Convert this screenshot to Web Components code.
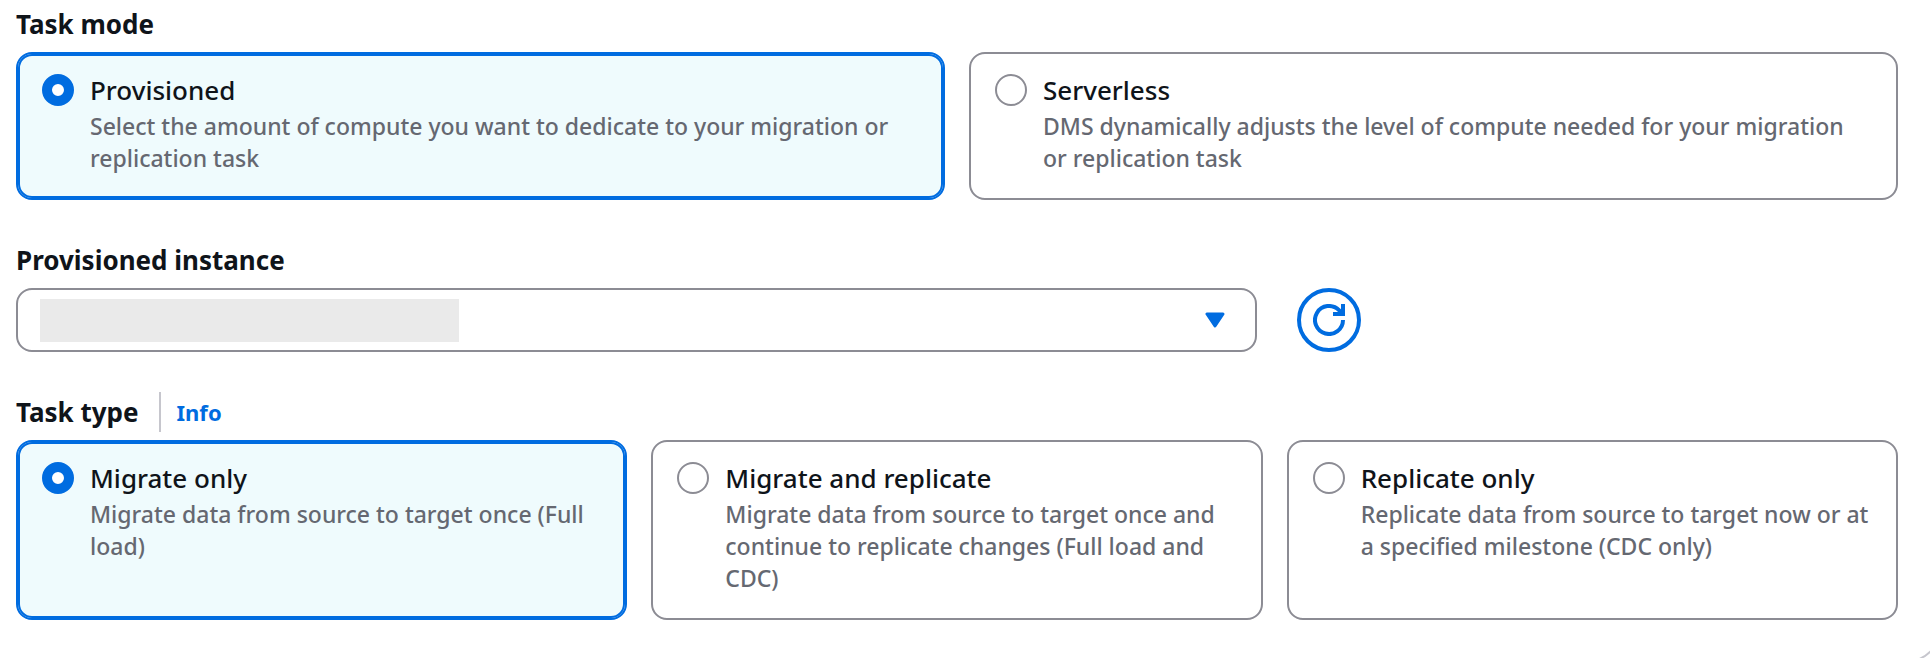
<!DOCTYPE html>
<html lang="en">
<head>
<meta charset="utf-8">
<meta name="viewport" content="width=device-width, initial-scale=1">
<title>Create data migration task</title>
<style>
  body {
    margin: 0;
    background: #fff;
    color: #0f141a;
    font-family: "Noto Sans", "Open Sans", sans-serif;
    overflow: hidden;
    --blue: #006ce0;
    --grey: #8c8c94;
    --grey-text: #656871;
    --selected: #effbfd;
  }
</style>
</head>
<body>
  <task-panel>
    <form-field label="Task mode">
      <tile-group label="Task mode">
        <tile-option name="mode" value="provisioned" checked>
          Provisioned
          <span slot="description">Select the amount of compute you want to dedicate to your migration or replication task</span>
        </tile-option>
        <tile-option name="mode" value="serverless">
          Serverless
          <span slot="description">DMS dynamically adjusts the level of compute needed for your migration or replication task</span>
        </tile-option>
      </tile-group>
    </form-field>

    <instance-select label="Provisioned instance"></instance-select>

    <form-field label="Task type">
      <info-link slot="info">Info</info-link>
      <tile-group label="Task type">
        <tile-option name="type" value="full-load" checked>
          Migrate only
          <span slot="description">Migrate data from source to target once (Full load)</span>
        </tile-option>
        <tile-option name="type" value="full-load-and-cdc">
          Migrate and replicate
          <span slot="description">Migrate data from source to target once and continue to replicate changes (Full load and CDC)</span>
        </tile-option>
        <tile-option name="type" value="cdc">
          Replicate only
          <span slot="description">Replicate data from source to target now or at a specified milestone (CDC only)</span>
        </tile-option>
      </tile-group>
    </form-field>
  </task-panel>

<script>
class TaskPanel extends HTMLElement {
  constructor() {
    super();
    this.attachShadow({ mode: "open" });
  }

  connectedCallback() {
    // the panel's frame runs past the window, only its lower corner shows
    this.shadowRoot.innerHTML = `
      <style>
        :host {
          display: flex;
          flex-direction: column;
          gap: 40px;
          margin: -38px -10px 0 -26px;
          padding: 40px;
          border: 2px solid #c6c6cd;
          border-radius: 32px;
        }
      </style>
      <slot></slot>
    `;
  }
}

class FormField extends HTMLElement {
  constructor() {
    super();
    this.attachShadow({ mode: "open" });
  }

  connectedCallback() {
    this.shadowRoot.innerHTML = `
      <style>
        :host {
          display: flex;
          flex-direction: column;
          gap: 8px;
        }
        header {
          display: flex;
          align-items: center;
          gap: 20px;
        }
        h2 {
          margin: 0;
          font-size: 26px;
          font-weight: 700;
          line-height: 40px;
        }
      </style>
      <header>
        <h2>${this.getAttribute("label")}</h2>
        <slot name="info"></slot>
      </header>
      <slot></slot>
    `;
  }
}

class InfoLink extends HTMLElement {
  constructor() {
    super();
    this.attachShadow({ mode: "open" });
  }

  connectedCallback() {
    this.shadowRoot.innerHTML = `
      <style>
        :host {
          display: block;
          border-left: 2px solid #c6c6cd;
          padding-left: 16px;
        }
        a {
          color: var(--blue);
          font-size: 22px;
          font-weight: 700;
          line-height: 40px;
          display: block;
          text-decoration: none;
        }
        a:hover {
          text-decoration: underline;
        }
      </style>
      <a href="#info"><slot></slot></a>
    `;
  }
}

class TileGroup extends HTMLElement {
  constructor() {
    super();
    this.attachShadow({ mode: "open" });
  }

  connectedCallback() {
    this.setAttribute("role", "radiogroup");
    this.setAttribute("aria-label", this.getAttribute("label"));
    this.shadowRoot.innerHTML = `
      <style>
        :host {
          display: grid;
          grid-auto-flow: column;
          grid-auto-columns: minmax(0, 1fr);
          gap: 24px;
        }
      </style>
      <slot></slot>
    `;

    // each radio sits in its own shadow root, so the group unchecks the others
    this.addEventListener("tileSelect", (event) => {
      this.querySelectorAll("tile-option").forEach((tile) => {
        tile.checked = tile === event.target;
      });
    });
  }
}

class TileOption extends HTMLElement {
  constructor() {
    super();
    this.attachShadow({ mode: "open" });
  }

  connectedCallback() {
    this.render();
    this.addEventListeners();
  }

  set checked(value) {
    this.toggleAttribute("checked", value);
    this.shadowRoot.querySelector("input").checked = value;
  }

  render() {
    this.shadowRoot.innerHTML = `
      <style>
        :host {
          display: flex;
          border: 2px solid var(--grey);
          border-radius: 16px;
        }
        :host([checked]) {
          border-color: var(--blue);
          background: var(--selected);
          box-shadow: inset 0 0 0 2px var(--blue);
        }
        label {
          flex: 1;
          display: flex;
          align-items: flex-start;
          gap: 16px;
          padding: 20px 24px 24px;
          cursor: pointer;
        }
        input {
          appearance: none;
          flex: none;
          box-sizing: border-box;
          width: 32px;
          height: 32px;
          margin: 0;
          border: 2px solid var(--grey);
          border-radius: 50%;
          background: #fff;
          cursor: pointer;
        }
        input:checked {
          border: 10px solid var(--blue);
        }
        .text {
          display: flex;
          flex-direction: column;
          gap: 4px;
        }
        .title {
          font-size: 26px;
          font-weight: 500;
          line-height: 32px;
        }
        .description {
          color: var(--grey-text);
          font-size: 23px;
          font-weight: 500;
          line-height: 32px;
        }
      </style>
      <label for="radio">
        <input type="radio" id="radio">
        <span class="text">
          <span class="title"><slot></slot></span>
          <span class="description"><slot name="description"></slot></span>
        </span>
      </label>
    `;
    const radio = this.shadowRoot.querySelector("input");
    radio.name = this.getAttribute("name");
    radio.value = this.getAttribute("value");
    radio.checked = this.hasAttribute("checked");
  }

  addEventListeners() {
    this.shadowRoot.querySelector("input").addEventListener("change", () => {
      this.dispatchEvent(new CustomEvent("tileSelect", { bubbles: true }));
    });
  }
}

class InstanceSelect extends HTMLElement {
  constructor() {
    super();
    this.attachShadow({ mode: "open" });
  }

  connectedCallback() {
    this.shadowRoot.innerHTML = `
      <style>
        :host {
          display: flex;
          flex-direction: column;
          gap: 8px;
        }
        label {
          font-size: 26px;
          font-weight: 700;
          line-height: 40px;
        }
        .row {
          display: grid;
          grid-template-columns: repeat(12, minmax(0, 1fr));
          gap: 40px;
        }
        .select {
          grid-column: span 8;
          display: grid;
          align-items: center;
        }
        .select > * {
          grid-area: 1 / 1;
        }
        select {
          appearance: none;
          width: 100%;
          height: 64px;
          padding: 0 64px 0 24px;
          border: 2px solid var(--grey);
          border-radius: 16px;
          background: #fff;
          color: inherit;
          font: 500 26px/32px "Noto Sans", sans-serif;
        }
        /* instance name is masked */
        .mask {
          width: 419px;
          height: 43px;
          margin-left: 24px;
          background: #eaeaea;
          pointer-events: none;
        }
        .caret {
          justify-self: end;
          margin-right: 32px;
          pointer-events: none;
        }
        button {
          box-sizing: border-box;
          width: 64px;
          height: 64px;
          padding: 0;
          border: 4px solid var(--blue);
          border-radius: 50%;
          background: #fff;
          color: var(--blue);
          display: grid;
          place-items: center;
          cursor: pointer;
        }
        svg {
          display: block;
        }
      </style>
      <label for="instance">${this.getAttribute("label")}</label>
      <div class="row">
        <div class="select">
          <select id="instance"><option value="masked"></option></select>
          <span class="mask"></span>
          <svg class="caret" width="20" height="16" viewBox="0 0 20 16" aria-hidden="true">
            <path d="M2 2h16l-8 12z" fill="#006ce0" stroke="#006ce0" stroke-width="3" stroke-linejoin="round"/>
          </svg>
        </div>
        <button type="button" aria-label="Refresh instances">
          <svg width="32" height="32" viewBox="0 0 32 32" fill="none" stroke="currentColor" stroke-width="4" aria-hidden="true">
            <path d="M30 16a14 14 0 1 1-4-9.800L29 9.500"/>
            <path d="M30 0v10H20"/>
          </svg>
        </button>
      </div>
    `;
  }
}

customElements.define("task-panel", TaskPanel);
customElements.define("form-field", FormField);
customElements.define("info-link", InfoLink);
customElements.define("tile-group", TileGroup);
customElements.define("tile-option", TileOption);
customElements.define("instance-select", InstanceSelect);
</script>
</body>
</html>
